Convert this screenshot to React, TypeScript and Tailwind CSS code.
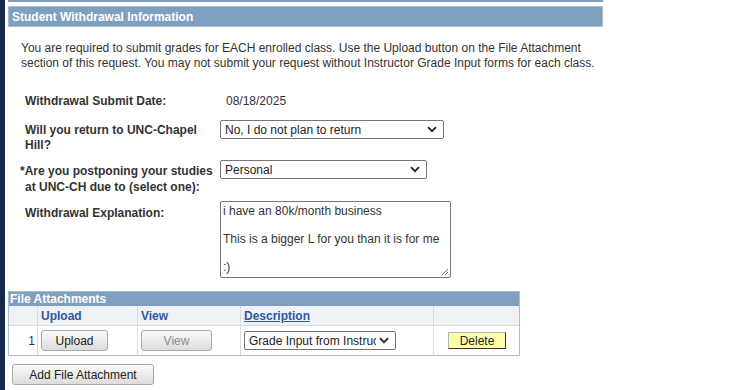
import React from "react";

const Chevron = () => (
  <svg width="10" height="7" viewBox="0 0 10 7" className="shrink-0">
    <path d="M1 1.2 L5 5.2 L9 1.2" fill="none" stroke="#222" strokeWidth="1.8" />
  </svg>
);

function Select({ value, width }: { value: string; width: string }) {
  return (
    <div
      className={`flex h-[19px] items-center justify-between gap-[3px] rounded-[2px] border border-[#767676] bg-white pl-[4px] pr-[6px] text-[12px] text-[#222] ${width}`}
    >
      <span className="min-w-0 overflow-hidden whitespace-nowrap text-clip">{value}</span>
      <Chevron />
    </div>
  );
}

const btn =
  "flex items-center justify-center rounded-[3px] border border-[#a9a9a9] bg-[linear-gradient(#fafafa,#dcdcdc)] text-[12px]";

export default function App() {
  return (
    <div className="flex h-[390px] w-[733px] bg-white font-['Liberation_Sans',Arial,sans-serif] text-[#333]">
      <div className="w-[5px] shrink-0 bg-[#14284b]" />
      <div className="flex w-[598px] flex-col pl-[3px]">
        <div className="h-[2px] w-full bg-[#7f9fc0]" />
        <div className="mt-[4px] flex h-[21px] items-center border border-[#a7bdd3] bg-[#7f9fbf] pl-[3px] text-[12px] font-bold text-white">
          Student Withdrawal Information
        </div>
        <p className="mt-[14px] pl-[13px] text-[12px] leading-[15px] text-[#333]">
          You are required to submit grades for EACH enrolled class. Use the Upload button on the File Attachment
          <br />
          section of this request. You may not submit your request without Instructor Grade Input forms for each class.
        </p>

        <div className="mt-[21px] flex text-[12px]">
          <div className="w-[212px] pl-[17px] font-bold">Withdrawal Submit Date:</div>
          <div className="pl-[6px]">08/18/2025</div>
        </div>

        <div className="mt-[10px] flex text-[12px]">
          <div className="w-[212px] pl-[17px] pt-[3px] font-bold leading-[15px]">
            Will you return to UNC-Chapel
            <br />
            Hill?
          </div>
          <Select value="No, I do not plan to return" width="w-[224px]" />
        </div>

        <div className="mt-[7px] flex text-[12px]">
          <div className="w-[212px] pl-[12px] pt-[3px] font-bold leading-[16px]">
            *Are you postponing your studies
            <br />
            <span className="pl-[5px]">at UNC-CH due to (select one):</span>
          </div>
          <Select value="Personal" width="w-[207px]" />
        </div>

        <div className="mt-[6px] flex text-[12px]">
          <div className="w-[212px] pl-[17px] pt-[3px] font-bold">Withdrawal Explanation:</div>
          <div className="relative h-[77px] w-[231px] rounded-[2px] border border-[#767676] bg-white pl-[2px] pt-[2px] leading-[14px] text-[#333]">
            <div>i have an 80k/month business</div>
            <div className="mt-[14px]">This is a bigger L for you than it is for me</div>
            <div className="mt-[14px]">:)</div>
            <svg className="absolute bottom-[1px] right-[1px]" width="9" height="9" viewBox="0 0 9 9">
              <path d="M8 2 L2 8 M8 5 L5 8" stroke="#777" strokeWidth="1" />
            </svg>
          </div>
        </div>

        <div className="mt-[13px] w-[512px] border border-[#a7bdd3] text-[12px]">
          <div className="flex h-[14px] items-center bg-[#7f9fbf] pl-[1px] font-bold leading-none text-white">
            File Attachments
          </div>
          <div className="flex h-[19px] items-center bg-[#eef1f5] font-bold text-[#32589c]">
            <div className="h-full w-[29px] border-r border-[#d7dde6]" />
            <div className="flex h-full w-[100px] items-center border-r border-[#d7dde6] pl-[3px]">Upload</div>
            <div className="flex h-full w-[103px] items-center border-r border-[#d7dde6] pl-[3px]">View</div>
            <div className="flex h-full w-[193px] items-center border-r border-[#d7dde6] pl-[3px] underline">Description</div>
            <div className="h-full flex-1" />
          </div>
          <div className="flex h-[30px] items-center border-t border-[#d7dde6] bg-white">
            <div className="flex h-full w-[29px] items-center justify-end border-r border-[#d7dde6] pr-[2px] text-[#333]">1</div>
            <div className="flex h-full w-[100px] items-center border-r border-[#d7dde6] pl-[3px]">
              <div className={`${btn} h-[21px] w-[67px] text-[#222]`}>Upload</div>
            </div>
            <div className="flex h-full w-[103px] items-center border-r border-[#d7dde6] pl-[3px]">
              <div className={`${btn} h-[21px] w-[71px] text-[#8a8a8a]`}>View</div>
            </div>
            <div className="flex h-full w-[193px] items-center border-r border-[#d7dde6] pl-[3px]">
              <Select value="Grade Input from Instructor" width="w-[152px]" />
            </div>
            <div className="flex h-full flex-1 items-center pl-[14px]">
              <div className="flex h-[17px] w-[58px] items-center justify-center border border-[#b3b3b3] border-b-[#333] border-r-[#333] bg-[#ffffa8] text-[#222]">
                Delete
              </div>
            </div>
          </div>
        </div>

        <div className={`${btn} ml-[4px] mt-[8px] h-[21px] w-[142px] text-[#222]`}>Add File Attachment</div>
      </div>
    </div>
  );
}
